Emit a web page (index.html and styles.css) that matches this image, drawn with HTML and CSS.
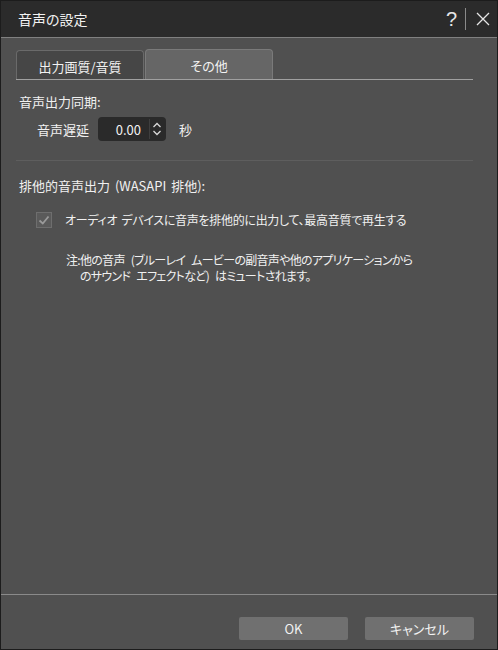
FILE: index.html
```html
<!DOCTYPE html>
<html lang="ja">
<head>
  <meta charset="UTF-8" />
  <title>音声の設定</title>
  <link rel="stylesheet" href="styles.css">
</head>
<body>
  <div class="window">
    <div class="titlebar">
      <div class="title">音声の設定</div>
      <div class="title-buttons">
        <span class="help">?</span>
        <span class="divider"></span>
        <svg class="close" width="14" height="14" viewBox="0 0 14 14">
          <path d="M1 1 L13 13 M13 1 L1 13" stroke="#e6e6e6" stroke-width="1.3" fill="none" />
        </svg>
      </div>
    </div>

    <div class="content">
      <div class="tabs">
        <div class="tab">出力画質/音質</div>
        <div class="tab active">その他</div>
      </div>

      <div class="section">
        <div class="section-title">音声出力同期:</div>
        <div class="delay-row">
          <span class="label">音声遅延</span>
          <div class="spinbox">
            <span class="spin-value">0.00</span>
            <div class="spin-arrows">
              <svg width="10" height="8" viewBox="0 0 10 8"><path d="M1.5 6 L5 2.5 L8.5 6" stroke="#d8d8d8" stroke-width="1.3" fill="none" /></svg>
              <svg width="10" height="8" viewBox="0 0 10 8"><path d="M1.5 2 L5 5.5 L8.5 2" stroke="#d8d8d8" stroke-width="1.3" fill="none" /></svg>
            </div>
          </div>
          <span class="unit">秒</span>
        </div>
      </div>

      <div class="separator"></div>

      <div class="section">
        <div class="section-title second">排他的音声出力 (WASAPI 排他):</div>
        <div class="check-row">
          <span class="checkbox">
            <svg width="14" height="14" viewBox="0 0 14 14"><path d="M2.5 7.5 L5.8 10.5 L11.5 3.5" stroke="#9a9a9a" stroke-width="1.8" fill="none" /></svg>
          </span>
          <span class="check-text">オーディオ デバイスに音声を排他的に出力して、最高音質で再生する</span>
        </div>
        <div class="note">
          <span class="note-head">注:</span>
          <span class="note-body">他の音声 (ブルーレイ ムービーの副音声や他のアプリケーションから<br>のサウンド エフェクトなど) はミュートされます。</span>
        </div>
      </div>
    </div>

    <div class="footer">
      <button class="button">OK</button>
      <button class="button">キャンセル</button>
    </div>
  </div>
</body>
</html>
```

FILE: styles.css
```css
* {
  box-sizing: border-box;
  margin: 0;
  padding: 0;
}
html, body {
  width: 100%;
  height: 100%;
  overflow: hidden;
}
body {
  font-family: "Noto Sans CJK JP", "Noto Sans", sans-serif;
  font-size: 13px;
  font-feature-settings: "palt";
  color: #f0f0f0;
  background: #505050;
}
.window {
  width: 498px;
  height: 650px;
  border: 1px solid #1c1c1c;
  display: flex;
  flex-direction: column;
  background: #505050;
}
.titlebar {
  height: 37px;
  background: #2b2b2b;
  border-bottom: 1px solid #808080;
  display: flex;
  align-items: center;
  justify-content: space-between;
  padding: 0 7px 0 17px;
  flex-shrink: 0;
}
.title {
  font-size: 14px;
  color: #f2f2f2;
}
.title-buttons {
  display: flex;
  align-items: center;
  gap: 8px;
}
.help {
  font-family: "Liberation Sans", sans-serif;
  font-size: 20px;
  color: #e6e6e6;
  line-height: 1;
}
.divider {
  width: 1px;
  height: 22px;
  background: #8a8a8a;
}
.close {
  margin-left: 2px;
}
.content {
  flex: 1;
  padding: 12px 24px 0 15px;
}
.tabs {
  display: flex;
  align-items: flex-end;
  height: 30px;
  border-bottom: 1px solid #a0a0a0;
}
.tab {
  width: 128px;
  height: 29px;
  background: #464646;
  border: 1px solid #6a6a6a;
  border-bottom: none;
  border-radius: 4px 4px 0 0;
  display: flex;
  align-items: center;
  justify-content: center;
  padding-top: 2px;
  color: #f2f2f2;
}
.tab.active {
  height: 30px;
  background: #666666;
  border-color: #7a7a7a;
  margin-left: 1px;
}
.section {
  padding-left: 3px;
}
.section-title {
  margin-top: 12px;
  line-height: 20px;
}
.section-title.second {
  margin-top: 15px;
  word-spacing: 2px;
}
.delay-row {
  display: flex;
  align-items: center;
  margin-top: 5px;
  padding-left: 18px;
}
.label {
  width: 61px;
}
.spinbox {
  width: 68px;
  height: 24px;
  background: #2a2a2a;
  border-radius: 4px;
  display: flex;
  align-items: center;
}
.spin-value {
  flex: 1;
  text-align: right;
  padding-right: 8px;
  color: #f2f2f2;
}
.spin-arrows {
  width: 14px;
  height: 20px;
  border-left: 1px solid #3e3e3e;
  display: flex;
  flex-direction: column;
  align-items: center;
  justify-content: center;
  margin-right: 3px;
}
.unit {
  margin-left: 13px;
}
.separator {
  height: 1px;
  background: #5e5e5e;
  margin-top: 19px;
}
.check-row {
  display: flex;
  align-items: center;
  margin-top: 15px;
  padding-left: 17px;
}
.check-text {
  font-size: 12px;
  letter-spacing: -0.3px;
  word-spacing: 2px;
}
.checkbox {
  width: 16px;
  height: 16px;
  border: 1px solid #6e6e6e;
  background: #5a5a5a;
  display: flex;
  align-items: center;
  justify-content: center;
  margin-right: 13px;
}
.note {
  display: flex;
  margin-top: 24px;
  padding-left: 47px;
  font-size: 12px;
  line-height: 16px;
  letter-spacing: -0.7px;
  word-spacing: 4px;
}
.note-head {
  flex-shrink: 0;
}
.footer {
  height: 55px;
  border-top: 1px solid #8a8a8a;
  display: flex;
  justify-content: flex-end;
  align-items: flex-start;
  gap: 17px;
  padding: 22px 23px 0 0;
  flex-shrink: 0;
}
.button {
  width: 109px;
  height: 23px;
  border: none;
  border-radius: 2px;
  background: #707070;
  color: #f2f2f2;
  font-family: "Noto Sans CJK JP", "Noto Sans", sans-serif;
  font-size: 13px;
  font-feature-settings: "palt";
}
```
